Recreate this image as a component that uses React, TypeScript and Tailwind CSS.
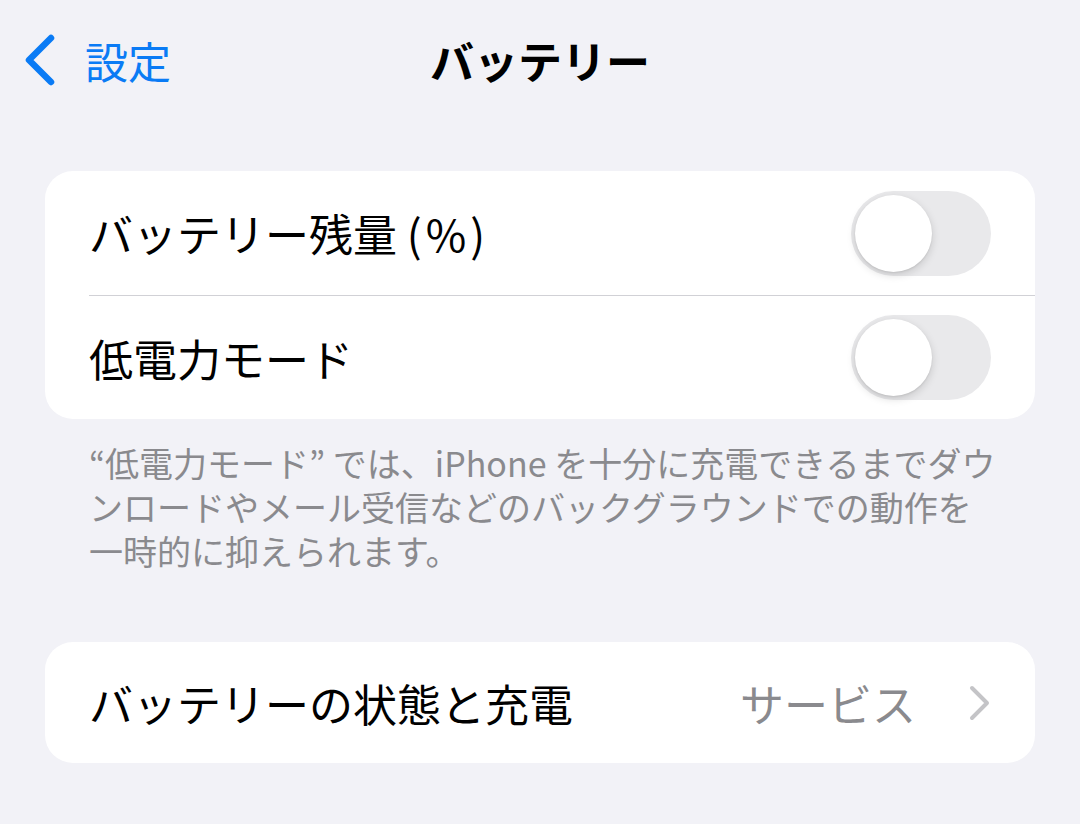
import React from "react";

const jp = '"Noto Sans CJK JP", "Noto Sans", sans-serif';

function Toggle() {
  return (
    <div className="w-[140px] h-[85px] rounded-full bg-[#e9e9eb] flex items-center pl-[4px] shrink-0">
      <div className="w-[77px] h-[77px] rounded-full bg-white shadow-[0_3px_8px_rgba(0,0,0,0.15),0_1px_2px_rgba(0,0,0,0.08)]" />
    </div>
  );
}

function BackChevron() {
  return (
    <svg width="34" height="52" viewBox="0 0 34 52" fill="none">
      <path d="M28 4 L6 26 L28 48" stroke="#0a7bf5" strokeWidth="6.5" strokeLinecap="round" strokeLinejoin="round" />
    </svg>
  );
}

function RowChevron() {
  return (
    <svg width="22" height="36" viewBox="0 0 22 36" fill="none">
      <path d="M3 3 L18 18 L3 33" stroke="#c4c4c7" strokeWidth="4" strokeLinecap="round" strokeLinejoin="round" />
    </svg>
  );
}

const noteLines = [
  "“低電力モード” では、iPhone を十分に充電できるまでダウ",
  "ンロードやメール受信などのバックグラウンドでの動作を",
  "一時的に抑えられます。",
];

export default function App() {
  return (
    <div className="w-[1080px] h-[824px] bg-[#f2f2f7] overflow-hidden" style={{ fontFamily: jp }}>
      {/* navigation bar */}
      <div className="h-[120px] grid grid-cols-[1fr_auto_1fr] items-center">
        <div className="flex items-center pl-[23px] gap-[28px] text-[#0a7bf5] text-[43px]">
          <BackChevron />
          <span className="leading-none">設定</span>
        </div>
        <div className="text-[44px] font-bold text-black leading-none">バッテリー</div>
        <div />
      </div>

      {/* toggles group */}
      <div className="mx-[45px] mt-[51px] bg-white rounded-[28px] overflow-hidden">
        <div className="h-[124px] flex items-center justify-between pl-[44px] pr-[44px]">
          <span className="text-[44px] text-black leading-none">
            バッテリー残量 <span className="tracking-[4px]">(%)</span>
          </span>
          <Toggle />
        </div>
        <div className="ml-[44px] h-px bg-[#d1d1d6]" />
        <div className="h-[123px] flex items-center justify-between pl-[44px] pr-[44px]">
          <span className="text-[44px] text-black leading-none">低電力モード</span>
          <Toggle />
        </div>
      </div>

      {/* footer note */}
      <div className="px-[89px] pt-[22px] text-[34px] text-[#8a8a8e] whitespace-nowrap flex flex-col">
        {noteLines.map((line) => (
          <div key={line} className="h-[44px] flex items-center leading-none">
            {line}
          </div>
        ))}
      </div>

      {/* battery health row */}
      <div className="mx-[45px] mt-[69px] bg-white rounded-[28px] h-[121px] flex items-center pl-[44px] pr-[44px]">
        <span className="text-[44px] text-black leading-none flex-1">バッテリーの状態と充電</span>
        <span className="text-[44px] text-[#8a8a8e] leading-none mr-[53px]">サービス</span>
        <RowChevron />
      </div>
    </div>
  );
}
